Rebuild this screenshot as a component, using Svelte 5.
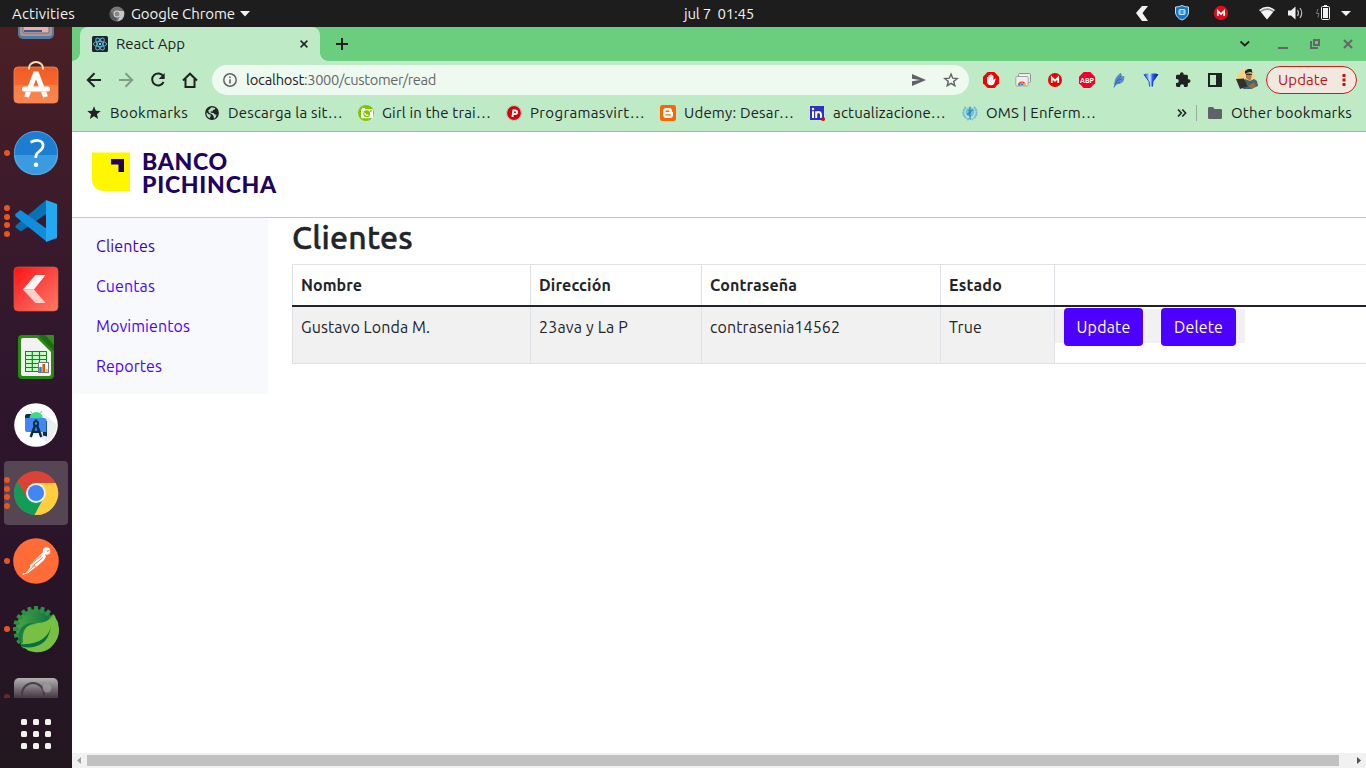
<script>
  // Spreads a label over a given width by adjusting its tracking.
  function fit(node, width) {
    const natural = node.getBoundingClientRect().width;
    const n = [...node.textContent].length;
    node.style.letterSpacing = (width - natural) / n + 'px';
  }

  const bookmarks = [
    { icon: 'star', label: 'Bookmarks', w: 78, cell: 118 },
    { icon: 'globe', label: 'Descarga la sit…', w: 115, cell: 154 },
    { icon: 'camera', label: 'Girl in the trai…', w: 109, cell: 148 },
    { icon: 'pin', label: 'Programasvirt…', w: 115, cell: 154 },
    { icon: 'blogger', label: 'Udemy: Desar…', w: 110, cell: 149 },
    { icon: 'linkedin', label: 'actualizacione…', w: 113, cell: 153 },
    { icon: 'oms', label: 'OMS | Enferm…', w: 110, cell: 212 }
  ];

  const extensions = ['hand', 'cards', 'mega', 'abp', 'feather', 'vee', 'puzzle', 'panel', 'avatar'];

  const dock = [
    { icon: 'drive', dots: 0 },
    { icon: 'store', dots: 0 },
    { icon: 'help', dots: 1 },
    { icon: 'code', dots: 4 },
    { icon: 'kred', dots: 0 },
    { icon: 'calc', dots: 0 },
    { icon: 'android', dots: 0 },
    { icon: 'chrome', dots: 4, active: true },
    { icon: 'postman', dots: 1 },
    { icon: 'spring', dots: 1 },
    { icon: 'shot', dots: 1 }
  ];

  const menu = [
    { label: 'Clientes', w: 59, current: true },
    { label: 'Cuentas', w: 59 },
    { label: 'Movimientos', w: 94 },
    { label: 'Reportes', w: 66 }
  ];

  const heads = [['Nombre', 61], ['Dirección', 72], ['Contraseña', 87], ['Estado', 53]];
  const cells = [['Gustavo Londa M.', 129], ['23ava y La P', 89], ['contrasenia14562', 130], ['True', 33]];
  const teeth = Array.from({ length: 20 }, (_, i) => i * 18);
</script>

{#snippet t(text, w)}<span class="fit" use:fit={w}>{text}</span>{/snippet}

{#snippet small(name)}
  <svg class="s16" width="16" height="16" viewBox="0 0 16 16">
    {#if name === 'star'}
      <path fill="#202124" d="M8 1.2l1.8 4.6 4.9.3-3.8 3.1 1.3 4.8L8 11.3 3.8 14l1.3-4.8L1.3 6.1l4.9-.3z" />
    {:else if name === 'globe'}
      <circle cx="8" cy="8" r="6.9" fill="#202124" />
      <path fill="#beeac6" d="M2.6 7.2l2.2 2 1.7.3.2 1.3-.9 2.5C3.3 12.200 2 10 2.600 7.200zM7.500 2.300l3.800.6-.5 1.500-1.800.6-.4 1.500-2-.2.3 1.500 2.700.2 1.300 1.500 1.700.2-.9 2.500-1.700 1.500-.5-2.800L8 9.200 5 7.700 4.200 5.500z" opacity=".95" />
    {:else if name === 'camera'}
      <circle cx="8" cy="8" r="8" fill="#80c600" />
      <rect x="3" y="4.200" width="12" height="9" rx="1" fill="#fff" />
      <rect x="4" y="3" width="3" height="2" fill="#fff" />
      <circle cx="8.700" cy="8.700" r="3.400" fill="#80c600" />
      <path d="M7 7.800a2 2 0 0 0 3.300 2" stroke="#fff" fill="none" stroke-width="1.300" />
      <rect x="12" y="5.200" width="1.600" height="1.600" fill="#80c600" />
    {:else if name === 'pin'}
      <circle cx="8" cy="8" r="7.600" fill="none" stroke="#8fb7ab" stroke-width=".8" stroke-dasharray="2 1" />
      <circle cx="8" cy="8" r="6.900" fill="#d9000d" />
      <path d="M6.500 12L7.300 5.500h2a1.700 1.700 0 0 1 0 3.500H7" stroke="#fff" stroke-width="1.900" fill="none" />
    {:else if name === 'blogger'}
      <rect width="16" height="16" rx="2.500" fill="#ff6400" />
      <path fill="#fff" d="M6 3h3.200a2.800 2.800 0 0 1 2.800 2.800c0 1 .2 1.200 1 1.300v3a2.900 2.900 0 0 1-2.900 2.900H6a2.900 2.900 0 0 1-2.900-2.900V5.900A2.900 2.900 0 0 1 6 3z" />
      <path d="M6.200 6.200h2.600M6.200 9.900h4" stroke="#ff6400" stroke-width="1.400" stroke-linecap="round" />
    {:else if name === 'linkedin'}
      <rect x="1" y="1" width="14" height="14" fill="#3030c8" />
      <path d="M4 6.300V13M7.200 13V6.300M7.200 9.500c0-3 4.800-3.600 4.800.3V13" stroke="#fff" stroke-width="2" fill="none" />
      <circle cx="4" cy="4" r="1.200" fill="#fff" />
      <circle cx="14" cy="14" r="2" fill="#e00010" />
    {:else if name === 'oms'}
      <path d="M4 2Q-1.500 8 4.500 13.500M12 2q5.500 6-.5 11.500M5 14.500q3-1 6 0" fill="none" stroke="#6fb9d4" stroke-width="2" stroke-dasharray="2 .5" />
      <circle cx="8" cy="7" r="4.500" fill="#74c0dc" />
      <path d="M8 1.500V14M6 5.500q4.500 1 1.500 3-1.500 1.500 1.500 3.500M5 9.500l6-5" stroke="#2b8db9" stroke-width="1.100" fill="none" />
    {:else if name === 'hand'}
      <path fill="#f00000" d="M4.700 0h6.600L16 4.700v6.600L11.300 16H4.700L0 11.300V4.700z" />
      <path fill="#fff" d="M4 7.500V5.200q.9-.9 1.500 0V3.500q.9-.9 1.600 0V2.700q.9-.9 1.700 0v.9q.9-.8 1.600.2v4.300l1-1.200q1-.7 1.300.2l-1.600 4.600Q10.400 13.300 8 13.300 4 13.300 4 9.500z" />
      <path d="M5.600 5v3M7.200 4v4M8.800 4v4" stroke="#f8aaaa" stroke-width=".4" />
    {:else if name === 'cards'}
      <rect x="3.500" y="1.500" width="12" height="9" rx="1" fill="#eee" stroke="#909090" />
      <rect x=".8" y="4.500" width="12.400" height="9.500" rx="1" fill="#eee" stroke="#a5a5a5" />
      <path d="M3.300 13.500a3.700 4 0 0 1 7.400 0z" fill="#e32" />
      <path d="M3 13.500l.8-3 2.200 3z" fill="#26a53a" /><path d="M8 13.500l2-3 .9 3z" fill="#fc3" />
      <circle cx="7" cy="12.500" r="1.600" fill="#247cf0" stroke="#fff" stroke-width=".5" />
    {:else if name === 'mega'}
      <circle cx="8" cy="8" r="7" fill="#f00000" />
      <path d="M4.800 11V5.500L8 8.700l3.200-3.200V11" fill="none" stroke="#fff" stroke-width="1.800" />
    {:else if name === 'abp'}
      <path fill="#f2002d" d="M4.700 0h6.600L16 4.700v6.600L11.300 16H4.700L0 11.300V4.700z" />
      <text x="8" y="10.800" text-anchor="middle" font-size="7.800" font-weight="700" fill="#fff" textLength="14" lengthAdjust="spacingAndGlyphs">ABP</text>
    {:else if name === 'feather'}
      <path fill="#5a8cd0" d="M3.500 15C2.500 7 6 4 9.500.8q1.800 1.500 1.300 3.500 2.600-1 2.600 1-.2 5.200-4.400 6.400-2.600.5-4 1.300z" />
      <path d="M3 15.500Q4.500 9 10 4M5 11l4-1M6 8.500l5-1.500" stroke="#315fa6" stroke-width=".8" fill="none" />
    {:else if name === 'vee'}
      <defs><linearGradient id="vee"><stop offset="0" stop-color="#0a2ce0" /><stop offset=".42" stop-color="#c8f0ff" /><stop offset=".6" stop-color="#2b66f0" /><stop offset="1" stop-color="#000a9c" /></linearGradient></defs>
      <path fill="url(#vee)" d="M1 2.500Q2.500 1 5 1.500h6q2.500-.5 4 1l-5 7-.5 5H6.500L6 9.500z" />
      <path d="M1 2.500L6 9.500l.6 5M15 2.500l-5 7-.5 5" stroke="#10219b" stroke-width=".8" fill="none" />
    {:else if name === 'puzzle'}
      <path fill="#202124" d="M13.700 7.300h-.8V4.200a1.400 1.400 0 0 0-1.400-1.400H8.600v-.7a1.800 1.800 0 0 0-3.600 0v.7H2.400A1.400 1.400 0 0 0 1 4.200v2.700h.8a2 2 0 0 1 0 4H1v2.700A1.400 1.400 0 0 0 2.400 15h2.700v-.8a2 2 0 0 1 4 0v.8h2.400a1.400 1.400 0 0 0 1.400-1.400v-2.700h.8a1.800 1.800 0 0 0 0-3.600z" />
    {:else if name === 'panel'}
      <path fill="#202124" fill-rule="evenodd" d="M1 1h14v14H1zM3 3v10h6V3z" />
    {/if}
  </svg>
{/snippet}

{#snippet app(name)}
  <svg class="app" width="48" height="48" viewBox="0 0 48 48">
    {#if name === 'drive'}
      <rect x="6" y="4" width="36" height="42" rx="5" fill="#537da0" />
      <rect x="8" y="6" width="32" height="37" rx="3" fill="#a99496" />
      <rect x="11" y="31" width="26" height="9" rx="1" fill="#e0b4ad" stroke="#6f6d85" /><path d="M12 38h18" stroke="#475b8c" stroke-width="2" />
    {:else if name === 'store'}
      <defs><linearGradient id="or" x2="0" y2="1"><stop offset="0" stop-color="#f15a24" /><stop offset=".49" stop-color="#f5682f" /><stop offset=".5" stop-color="#f67c45" /><stop offset="1" stop-color="#fa864f" /></linearGradient></defs>
      <rect x="2" y="6" width="44" height="36" rx="4" fill="url(#or)" stroke="#ed8d5d" stroke-width=".8" />
      <path d="M17 8.500V7a7 6 0 0 1 14 0v1.500" fill="none" stroke="#f9dfae" stroke-width="2" />
      <path d="M14.500 36l2.200-6M33.500 36l-2.200-6M18 27L23.300 13h1.400L30 27" fill="none" stroke="#fff" stroke-width="5" />
      <rect x="10" y="25.500" width="28" height="5" rx="2.500" fill="#fff" /><path d="M12 30.700h24" stroke="#f5c5b4" stroke-width=".8" />
    {:else if name === 'help'}
      <circle cx="24" cy="24" r="22" fill="#1d7dd2" /><path fill="#3a9be0" d="M2 26h44a22 20 0 0 1-44 0z" />
      <circle cx="24" cy="24" r="21.600" fill="none" stroke="#65aee0" stroke-width=".8" />
      <path d="M18.500 13.200q4-2 7.500-1.700 5.500.7 5 5.700-.3 3-4.500 5.800-3 2.200-2.800 6" fill="none" stroke="#fff" stroke-width="2.700" /><circle cx="24" cy="35.700" r="2.300" fill="#fff" />
    {:else if name === 'code'}
      <path fill="#0871b6" d="M34 3v14L9 34.500l-5.500-4 .2-2z" />
      <path fill="#118ddd" d="M3.200 17L8.500 13 35 32v13L3.500 19.500z" />
      <path fill="#23a9f2" d="M34 3l11 4v34l-11 4z" />
    {:else if name === 'kred'}
      <defs><linearGradient id="kr" x2="1" y2="1"><stop offset="0" stop-color="#ff1212" /><stop offset=".5" stop-color="#fa4944" /><stop offset="1" stop-color="#ff7b61" /></linearGradient></defs>
      <rect x="2" y="2" width="44" height="44" rx="4" fill="url(#kr)" stroke="#c75b52" stroke-width=".7" />
      <path fill="#fff" fill-opacity=".94" d="M23.500 10h10L22 24.500H11z" /><path fill="#ffd1ca" d="M11 24.500h11L33.500 38h-10z" />
    {:else if name === 'calc'}
      <path fill="#278b13" d="M10 2h20l12 12v28q0 4-4 4H10q-4 0-4-4V6q0-4 4-4z" />
      <path fill="#f2f2f2" d="M11 5h14l14 14v22q0 2-2 2H11q-2 0-2-2V7q0-2 2-2z" /><path fill="#216b16" d="M26 2l16 16V11L33 2z" />
      <path fill="#30901e" d="M33 2h8q1 0 1 1v9z" />
      <rect x="13" y="18" width="22" height="21" fill="#18851b" /><path d="M14 20.500h20M14 24.500h20M14 28.500h20M14 32.500h20M14 36.500h20" stroke="#c6ffc8" stroke-width="2.800" />
      <path d="M20.300 19v19M27.500 19v19" stroke="#18851b" stroke-width="1.200" />
      <rect x="26.500" y="29.500" width="10" height="10" fill="#fff" stroke="#807276" /><path d="M28.500 39v-5" stroke="#1788c9" stroke-width="2.500" /><path d="M31.700 39v-8" stroke="#d85212" stroke-width="2.500" /><path d="M34.700 39v-3" stroke="#f4bd33" stroke-width="2" />
    {:else if name === 'android'}
      <circle cx="24" cy="24" r="21.800" fill="#fff" /><path fill="#eee" d="M34 14l11 10q-2 12-10 18l-7-6z" />
      <path fill="#073042" d="M13 15q0-2 2-2h5v5h-7z" /><path fill="#073042" d="M30 20h5v15.500l-4-1z" />
      <path fill="#4285f4" d="M13 17h19q2.500 0 2.500 2.500V31H15q-2 0-2-2z" />
      <path fill="#3ddc84" d="M17.500 17a6.700 6 0 0 1 13.400 0z" /><path d="M20 12l-1.500-2M28.500 12l1.500-2" stroke="#3ddc84" />
      <circle cx="24" cy="22.500" r="2.200" fill="none" stroke="#073042" stroke-width="1.800" /><path d="M24 18.500v2M23 24.500L18.700 36M25 24.500L29.300 36M20 29.500q4 3 8 0" stroke="#073042" stroke-width="2.500" fill="none" />
    {:else if name === 'chrome'}
      <circle cx="24" cy="24" r="22" fill="#da4437" />
      <path fill="#0f9d58" d="M5.300 12.500A22 22 0 0 0 23 46l9-17H15z" /><path fill="#ffcd40" d="M43.700 14H24v5l8 9-9.500 18A22 22 0 0 0 43.700 14z" />
      <circle cx="24" cy="24" r="10" fill="#f1f1f1" /><circle cx="24" cy="24" r="8" fill="#4285f4" />
    {:else if name === 'postman'}
      <circle cx="24" cy="24" r="22.800" fill="#ff6c37" />
      <circle cx="34.500" cy="14" r="3.800" fill="#fff" /><path d="M34.500 14q1.500.8 3-1" stroke="#ff6c37" fill="none" />
      <path fill="#fff" d="M30.500 15.500q3 1 3.500 4L32 23l-6 5.500-10.500 8L10.500 38l.5-2 3 0 4.500-6-1-1.500z" />
      <path d="M18.500 27.500l11-9M20 29.500l11-9M15 35.500l8-7.500M22 29l2 1" stroke="#ff6c37" stroke-width=".8" />
    {:else if name === 'spring'}
      <defs><linearGradient id="sp" x2="1"><stop offset="0" stop-color="#4ba548" /><stop offset="1" stop-color="#066c3e" /></linearGradient></defs>
      <circle cx="24" cy="24" r="20" fill="url(#sp)" />
      {#each teeth as a}<rect x="22" y="1" width="4" height="6" rx=".6" fill="#2d9044" transform="rotate({a} 24 24)" />{/each}
      <path fill="#78c043" d="M41.500 9.500Q50 22 45.500 33 38 49 22 47q-7-1-13-7Q7 23 22 18q14 1 19.500-8.500z" />
      <path fill="#086f3e" d="M7.500 39q15 1 23-5 7-5 8.500-12.500-2 12.500-9 17-10 6-20 3z" />
      <path fill="#086f3e" d="M8 38q1 1.500 3-.5Q9 18 26 19q-10-3-17 4-4 6-1 15z" opacity=".7" />
    {:else if name === 'shot'}
      <defs><linearGradient id="sh" x2="0" y2="1"><stop offset="0" stop-color="#b3b2af" /><stop offset=".45" stop-color="#4a3c48" /></linearGradient></defs>
      <rect x="2" y="5" width="44" height="42" rx="5" fill="url(#sh)" /><circle cx="21" cy="21" r="11" fill="none" stroke="#454049" stroke-width="2" /><circle cx="35" cy="15" r="4.500" fill="#a6a3a5" opacity=".6" />
    {/if}
  </svg>
{/snippet}

<div class="desktop">
  <header class="topbar">
    <span class="activities">{@render t('Activities', 63)}</span>
    <svg class="cr" width="16" height="16" viewBox="0 0 16 16"><circle cx="8" cy="8" r="7.500" fill="#777" /><path fill="#c5c5c5" d="M8 5h7q1.500 8-6.500 10.500L11.500 9z" /><path fill="#595959" d="M1.300 5l4 4.500 3 1.500L7 15.300Q-1 13 1.300 5z" /><circle cx="8" cy="8" r="3.500" fill="#d8d8d8" /><circle cx="8" cy="8" r="2.500" fill="#888" /></svg>
    <span class="appname">{@render t('Google Chrome', 104)}</span>
    <svg class="caret" width="10" height="6"><path d="M0 0h10L5 5.500z" fill="#f2f2f2" /></svg>
    <span class="clock">{@render t('jul 7  01:45', 70)}</span>
    <svg class="tray" width="230" height="27" viewBox="1130 0 230 27">
      <path d="M1142 6h6l-5.500 7 5.500 8h-6l-6-8z" fill="#f2f2f2" />
      <path d="M1175.500 7q3.500 0 6.500-1.500 3 1.500 6.500 1.500v6q-1 5-6.500 7-5.500-2-6.500-7z" fill="#1875c2" stroke="#b8def4" /><rect x="1179" y="9.500" width="6" height="5" rx="1" fill="#6db4e8" stroke="#cae8fb" /><path d="M1182 10v4" stroke="#1875c2" />
      <circle cx="1221" cy="13" r="7.200" fill="#e20c18" /><path d="M1217.800 16v-5l3.200 3 3.200-3v5" fill="none" stroke="#fff" stroke-width="1.700" />
      <path d="M1259.500 10.500q7.500-6 15 0l-7.500 9z" fill="#8b8b8b" /><path d="M1261 12q6-4 12 0l-6 7.500z" fill="#f5f5f5" /><path d="M1259.500 10.500q7.500-6 15 0" stroke="#f5f5f5" fill="none" stroke-width="1.500" />
      <path d="M1288 10.500h3l4.500-4v13l-4.500-4h-3z" fill="#f2f2f2" /><path d="M1297.500 10q2 3 0 6M1300 8q3.500 5 0 10" stroke="#bbb" fill="none" stroke-width="1.200" />
      <path d="M1318 9l-1.500 4.500h2.500l-1 4" stroke="#777" fill="none" stroke-width="1" /><rect x="1321.500" y="6.500" width="8" height="13" rx="1" fill="none" stroke="#f2f2f2" /><path d="M1324 5h3v1h-3zM1323 8h5v10h-5z" fill="#f2f2f2" />
      <path d="M1341 11h10l-5 5z" fill="#f2f2f2" />
    </svg>
  </header>

  <div class="body">
    <aside class="dock">
      <div class="apps">
        {#each dock as d}
          <div class="item" class:active={d.active} class:faded={d.icon === 'shot'}>
            <div class="dots">{#each Array(d.dots) as _}<i></i>{/each}</div>
            {@render app(d.icon)}
          </div>
        {/each}
      </div>
      <div class="grid">{#each Array(9) as _}<i></i>{/each}</div>
    </aside>

    <main class="browser">
      <div class="tabs">
        <div class="tab">
          <svg width="16" height="16" viewBox="0 0 16 16"><rect width="16" height="16" rx="1.500" fill="#20232a" /><g fill="none" stroke="#5eb9d6" stroke-width=".9"><ellipse cx="8" cy="8" rx="6.700" ry="2.600" /><ellipse cx="8" cy="8" rx="6.700" ry="2.600" transform="rotate(60 8 8)" /><ellipse cx="8" cy="8" rx="6.700" ry="2.600" transform="rotate(120 8 8)" /></g><circle cx="8" cy="8" r="1.200" fill="#61dafb" /></svg>
          <span class="title">{@render t('React App', 69)}</span>
          <svg class="x" width="8" height="8" viewBox="0 0 8 8"><path d="M.6.6l6.800 6.800M7.400.6L.6 7.400" stroke="#202124" stroke-width="1.500" /></svg>
        </div>
        <svg class="plus" width="12" height="12"><path d="M6 0v12M0 6h12" stroke="#202124" stroke-width="2" /></svg>
        <svg class="wm" width="126" height="34" viewBox="1234 27 126 34"><path d="M1240.500 41.500l4.300 4 4.300-4" fill="none" stroke="#202124" stroke-width="1.800" /><path d="M1278 47h10v2h-10z" fill="#65656a" /><path d="M1314 40h5v5h-5zM1311 41v7h7" fill="none" stroke="#65656a" stroke-width="2" /><path d="M1344 40l8 8M1352 40l-8 8" stroke="#65656a" stroke-width="2" /></svg>
      </div>

      <div class="toolbar">
        <svg class="nav" width="128" height="30" viewBox="78 65 128 30" fill="none" stroke="#202124" stroke-width="2">
          <path d="M101 80H88M94.500 73.300L87.800 80l6.700 6.700" /><path d="M119 80h13M125.500 73.300l6.700 6.700-6.700 6.700" stroke="#7f9c85" />
          <path d="M163.300 76.300A6 6 0 1 0 163.600 82" /><path d="M164.700 73v6h-6z" fill="#202124" stroke="none" />
          <path d="M183 80.500l7-6.800 7 6.800M185.500 79v8h9v-8" />
        </svg>
        <div class="omni">
          <svg width="14" height="14"><circle cx="7" cy="7" r="6.200" fill="none" stroke="#5f6368" stroke-width="1.500" /><path d="M7 6.200v4.300M7 3.500v1.600" stroke="#5f6368" stroke-width="1.600" /></svg>
          <span class="url"><b>{@render t('localhost', 58)}</b>{@render t(':3000/customer/read', 132)}</span>
          <svg class="send" width="14" height="12"><path d="M0 0l14 6-14 6V7.200L8 6 0 4.800z" fill="#5f6368" /></svg>
          <svg class="fav" width="16" height="16" viewBox="0 0 16 16"><path d="M8 2l1.700 4.200 4.500.3-3.500 2.900 1.100 4.300L8 11.400l-3.800 2.300 1.100-4.300-3.500-2.900 4.500-.3z" fill="none" stroke="#5f6368" stroke-width="1.400" /></svg>
        </div>
        <div class="exts">
          {#each extensions as e}
            <span class="ext">
              {#if e === 'avatar'}
                <svg width="22" height="22" viewBox="0 0 22 22"><circle cx="10" cy="10" r="9.500" fill="#f4d483" /><path d="M9 10l5 2 4-2 3 2 1 5-7 3H7z" fill="#40666e" /><path d="M10 4h5.500v5L14 12l-4-3z" fill="#b77950" /><path d="M9 5V2l3-2h3.500l1 4-2-1-4 1z" fill="#2d211f" /><path d="M10 5.500h6" stroke="#35332e" /><path d="M0 10l8-.5 3.500 8L4 20z" fill="#30302f" /><path d="M12 17l6-4 2 4-4 3z" fill="#9b694a" /></svg>
              {:else}{@render small(e)}{/if}
            </span>
          {/each}
        </div>
        <div class="update">{@render t('Update', 50)}<svg width="4" height="14"><path d="M.5 1h3v3h-3zM.5 5.500h3v3h-3zM.5 10h3v3h-3z" fill="#c5110f" /></svg></div>
      </div>

      <div class="marks">
        {#each bookmarks as b}
          <div class="mark" style:width="{b.cell}px">{@render small(b.icon)}{@render t(b.label, b.w)}</div>
        {/each}
        <svg class="more" width="10" height="8"><path d="M1 .5L4.300 4 1 7.500M5.300.5L8.600 4 5.300 7.500" fill="none" stroke="#202124" stroke-width="1.600" /></svg>
        <span class="sep"></span>
        <svg class="folder" width="14" height="12"><path d="M0 1.300Q0 0 1.300 0H5l1.500 2h6.200Q14 2 14 3.300v7.400q0 1.300-1.300 1.300H1.300Q0 12 0 10.700z" fill="#5f6368" /></svg>
        {@render t('Other bookmarks', 121)}
      </div>

      <div class="page">
        <header class="brand">
          <svg width="39" height="39"><path d="M0 0.500h38V39H12Q0 38 0 27z" fill="#fff700" /><path d="M19 7h13v13h-5.500v-7.500H19z" fill="#200060" /></svg>
          <div class="name"><span>{@render t('BANCO', 86)}</span><span>{@render t('PICHINCHA', 135)}</span></div>
        </header>
        <div class="content">
          <nav class="side">
            {#each menu as m}<a href="#top" class:current={m.current}>{@render t(m.label, m.w)}</a>{/each}
          </nav>
          <section>
            <h2>{@render t('Clientes', 121)}</h2>
            <div class="table">
              <div class="row head">{#each heads as h}<div>{@render t(h[0], h[1])}</div>{/each}<div></div></div>
              <div class="row data">{#each cells as c}<div>{@render t(c[0], c[1])}</div>{/each}<div class="actions"><div class="strip"><button>{@render t('Update', 54)}</button><button class="del">{@render t('Delete', 49)}</button></div></div></div>
            </div>
          </section>
        </div>
        <div class="scroll"><svg width="15" height="15"><path d="M9 4v7L5 7.500z" fill="#a3a3a3" /></svg><div class="thumb"></div><svg width="27" height="15"><path d="M18 4v7l4-3.500z" fill="#505050" /></svg></div>
      </div>
    </main>
  </div>
</div>

<style>
  :global(body) { margin: 0; overflow: hidden; }
  * { box-sizing: border-box; }
  svg { display: block; flex: none; }
  .fit { white-space: pre; display: inline-block; }
  .desktop { width: 1366px; height: 768px; overflow: hidden; font: 15px/20px "Ubuntu", "Noto Sans", sans-serif; color: #202124; background: #fff; }
  .topbar { height: 27px; background: #1d1d1d; color: #f2f2f2; display: flex; align-items: center; padding-left: 12px; }
  .activities { width: 97px; }
  .cr { margin-right: 6px; }
  .appname { width: 109px; }
  .clock { margin-left: 434px; width: 446px; }
  .caret { margin-top: 1px; }
  .body { display: flex; height: 741px; }
  .dock { width: 72px; background: linear-gradient(#4a2024, #3b1a2b 25%, #2f172d 45%, #281428 75%, #22171f); display: flex; flex-direction: column; }
  .apps { height: 671px; overflow: hidden; padding: 0 4px; display: flex; flex-direction: column; gap: 4px; }
  .item { height: 64px; flex: none; border-radius: 4px; display: flex; align-items: center; }
  .item:first-child { margin-top: -42px; }
  .active { background: #564654; }
  .dots { width: 6px; margin-right: 2px; display: flex; flex-direction: column; gap: 2.700px; }
  .dots i { width: 6px; height: 6px; border-radius: 50%; background: #e95420; }
  .faded .dots { opacity: .35; }
  .grid { margin: 21px 0 0 21px; display: grid; grid-template-columns: repeat(3, 6px); gap: 6px; }
  .grid i { width: 6px; height: 6px; border-radius: 1.500px; background: #f2f1ed; }
  .browser { width: 1294px; display: flex; flex-direction: column; }
  .tabs { height: 34px; background: #6bcd7e; display: flex; align-items: center; padding-left: 8px; }
  .tab { width: 240px; height: 34px; background: #beeac6; border-radius: 8px 8px 0 0; display: flex; align-items: center; padding-left: 12px; }
  .tab::before, .tab::after { content: ""; width: 8px; height: 8px; flex: none; align-self: flex-end; }
  .tab::before { margin-left: -20px; margin-right: 12px; background: radial-gradient(circle at 0 0, #6bcd7e 7.500px, #beeac6 8px); }
  .tab::after { margin-left: auto; margin-right: -8px; background: radial-gradient(circle at 100% 0, #6bcd7e 7.500px, #beeac6 8px); }
  .title { margin-left: 8px; width: 184px; }
  .plus { margin-left: 16px; }
  .wm { margin-left: auto; margin-right: 6px; }
  .toolbar { height: 38px; background: #beeac6; display: flex; align-items: center; padding-left: 6px; }
  .omni { margin-left: 6px; width: 757px; height: 30px; border-radius: 15px; background: #eefaf0; display: flex; align-items: center; padding-left: 11px; }
  .url { margin-left: 9px; width: 666px; color: #65686a; font-size: 14.700px; }
  .url b { font-weight: 400; color: #202124; }
  .fav { margin-left: 17px; }
  .exts { display: flex; margin-left: 6px; }
  .ext { width: 32px; display: flex; justify-content: center; align-items: center; }
  .update { margin-left: 3px; width: 91px; height: 28px; border: 1px solid #d01b12; border-radius: 14px; background: #f1e8e0; color: #c5110f; display: flex; align-items: center; padding-left: 11px; gap: 14px; }
  .marks { height: 33px; background: #beeac6; border-bottom: 1px solid #9bbca1; display: flex; align-items: center; padding: 0 0 4px 14px; }
  .mark { display: flex; align-items: center; gap: 8px; flex: none; }
  .more { margin-left: 3px; margin-right: 9px; }
  .sep { width: 1px; height: 16px; background: #91af97; }
  .folder { margin: 0 9px 0 11px; }
  .page { height: 636px; display: flex; flex-direction: column; font-size: 16px; line-height: 24px; color: #212529; }
  .brand { height: 86px; border-bottom: 1px solid #c8c8be; display: flex; padding: 20px; gap: 11px; }
  .name { font: 900 23px/23px "Lato", sans-serif; color: #200060; display: flex; flex-direction: column; margin-top: -2px; }
  .name span { height: 23px; }
  .content { display: flex; height: 535px; overflow: hidden; }
  .side { width: 196px; height: 176px; background: #f8f9fc; padding: 8px 24px; display: flex; flex-direction: column; }
  .side a { height: 40px; padding-top: 8px; color: #4c00ff; text-decoration: none; }
  .side a.current { color: #3b00c9; }
  section { margin-left: 24px; width: 1074px; }
  h2 { margin: 0 0 8px; font-weight: 500; font-size: 32px; line-height: 38px; -webkit-text-stroke: .5px #212529; }
  .row { display: grid; grid-template-columns: 238px 171px 239px 114px 312px; }
  .row > div { border-left: 1px solid #dee2e6; padding-left: 8px; }
  .head { border-top: 1px solid #dee2e6; border-bottom: 2px solid #212529; height: 43px; font-weight: 700; }
  .head > div { padding-top: 8px; }
  .data { height: 57px; border-bottom: 1px solid #dee2e6; }
  .data > div { background: #f1f1f1; padding-top: 8px; }
  .data > .actions { background: #fff; padding: 2px 0 0; }
  .strip { width: 190px; height: 34px; background: #f1f1f1; display: flex; padding-left: 9px; gap: 18px; }
  button { margin-top: -1px; width: 79px; height: 38px; border: 0; border-radius: 4px; background: #4c00ff; color: #fff; padding: 0; font: inherit; }
  .del { width: 75px; }
  .scroll { height: 15px; background: #f1f1f1; display: flex; align-items: center; }
  .thumb { flex: 1; height: 11px; background: #c1c1c1; }
</style>
